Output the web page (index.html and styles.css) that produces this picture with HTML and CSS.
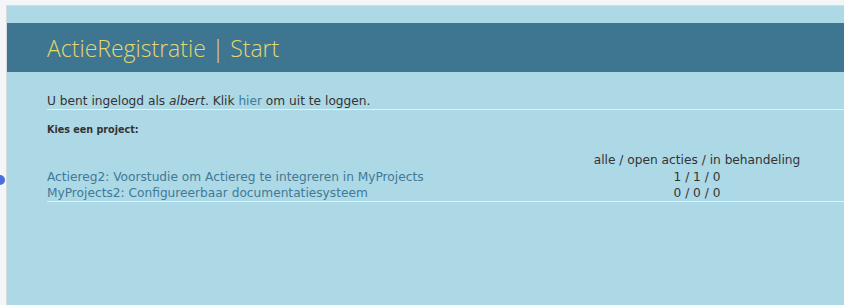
FILE: index.html
```html
<!DOCTYPE html>
<html>
<head>
  <meta charset="UTF-8">
  <title>ActieRegistratie | Start</title>
  <link rel="stylesheet" href="styles.css">
</head>
<body>
  <span class="dot"></span>
  <div class="frame">
    <div class="header">
      <h1>ActieRegistratie | Start</h1>
    </div>
    <div class="content">
      <p class="login">U bent ingelogd als <em>albert</em>. Klik <a href="#">hier</a> om uit te loggen.</p>
      <p class="kies">Kies een project:</p>
      <table class="projects">
        <tr>
          <th></th>
          <th>alle / open acties / in behandeling</th>
        </tr>
        <tr>
          <td><a href="#">Actiereg2: Voorstudie om Actiereg te integreren in MyProjects</a></td>
          <td class="num">1 / 1 / 0</td>
        </tr>
        <tr>
          <td><a href="#">MyProjects2: Configureerbaar documentatiesysteem</a></td>
          <td class="num">0 / 0 / 0</td>
        </tr>
      </table>
    </div>
  </div>
</body>
</html>
```

FILE: styles.css
```css
html, body { margin: 0; padding: 0; height: 100%; }
body { background: #f4f5f6; font-family: "DejaVu Sans", sans-serif; color: #333; overflow: hidden; }
.frame { margin: 5px 0 0 6px; border-top: 1px solid #d7dadc; border-left: 1px solid #d7dadc; background: #add8e6; height: 100%; padding-top: 17px; box-sizing: border-box; }
.header { background: #3e7590; height: 49px; padding-left: 40px; display: flex; align-items: center; }
.header h1 { margin: 0; font-family: "Open Sans", sans-serif; font-size: 23px; font-weight: 300; color: #e4d770; }
.content { padding-left: 40px; }
.login { margin: 22px 0 0; font-size: 12.2px; line-height: 15px; border-bottom: 1px solid #e3eff3; }
.login em { font-style: italic; }
a { color: #3f7a96; text-decoration: none; }
.kies { margin: 14px 0 0; font-size: 9.6px; font-weight: bold; }
.projects { margin-top: 17px; border-collapse: collapse; width: 100%; font-size: 12.2px; border-bottom: 1px solid #e3eff3; }
.projects th { font-weight: normal; padding: 0; line-height: 17px; }
.projects td { padding: 0; line-height: 16px; }
.projects th:last-child, .num { width: 294px; text-align: center; }
.dot { position: absolute; left: -5px; top: 175px; width: 10px; height: 10px; border-radius: 50%; background: #4a6ee0; }
```
